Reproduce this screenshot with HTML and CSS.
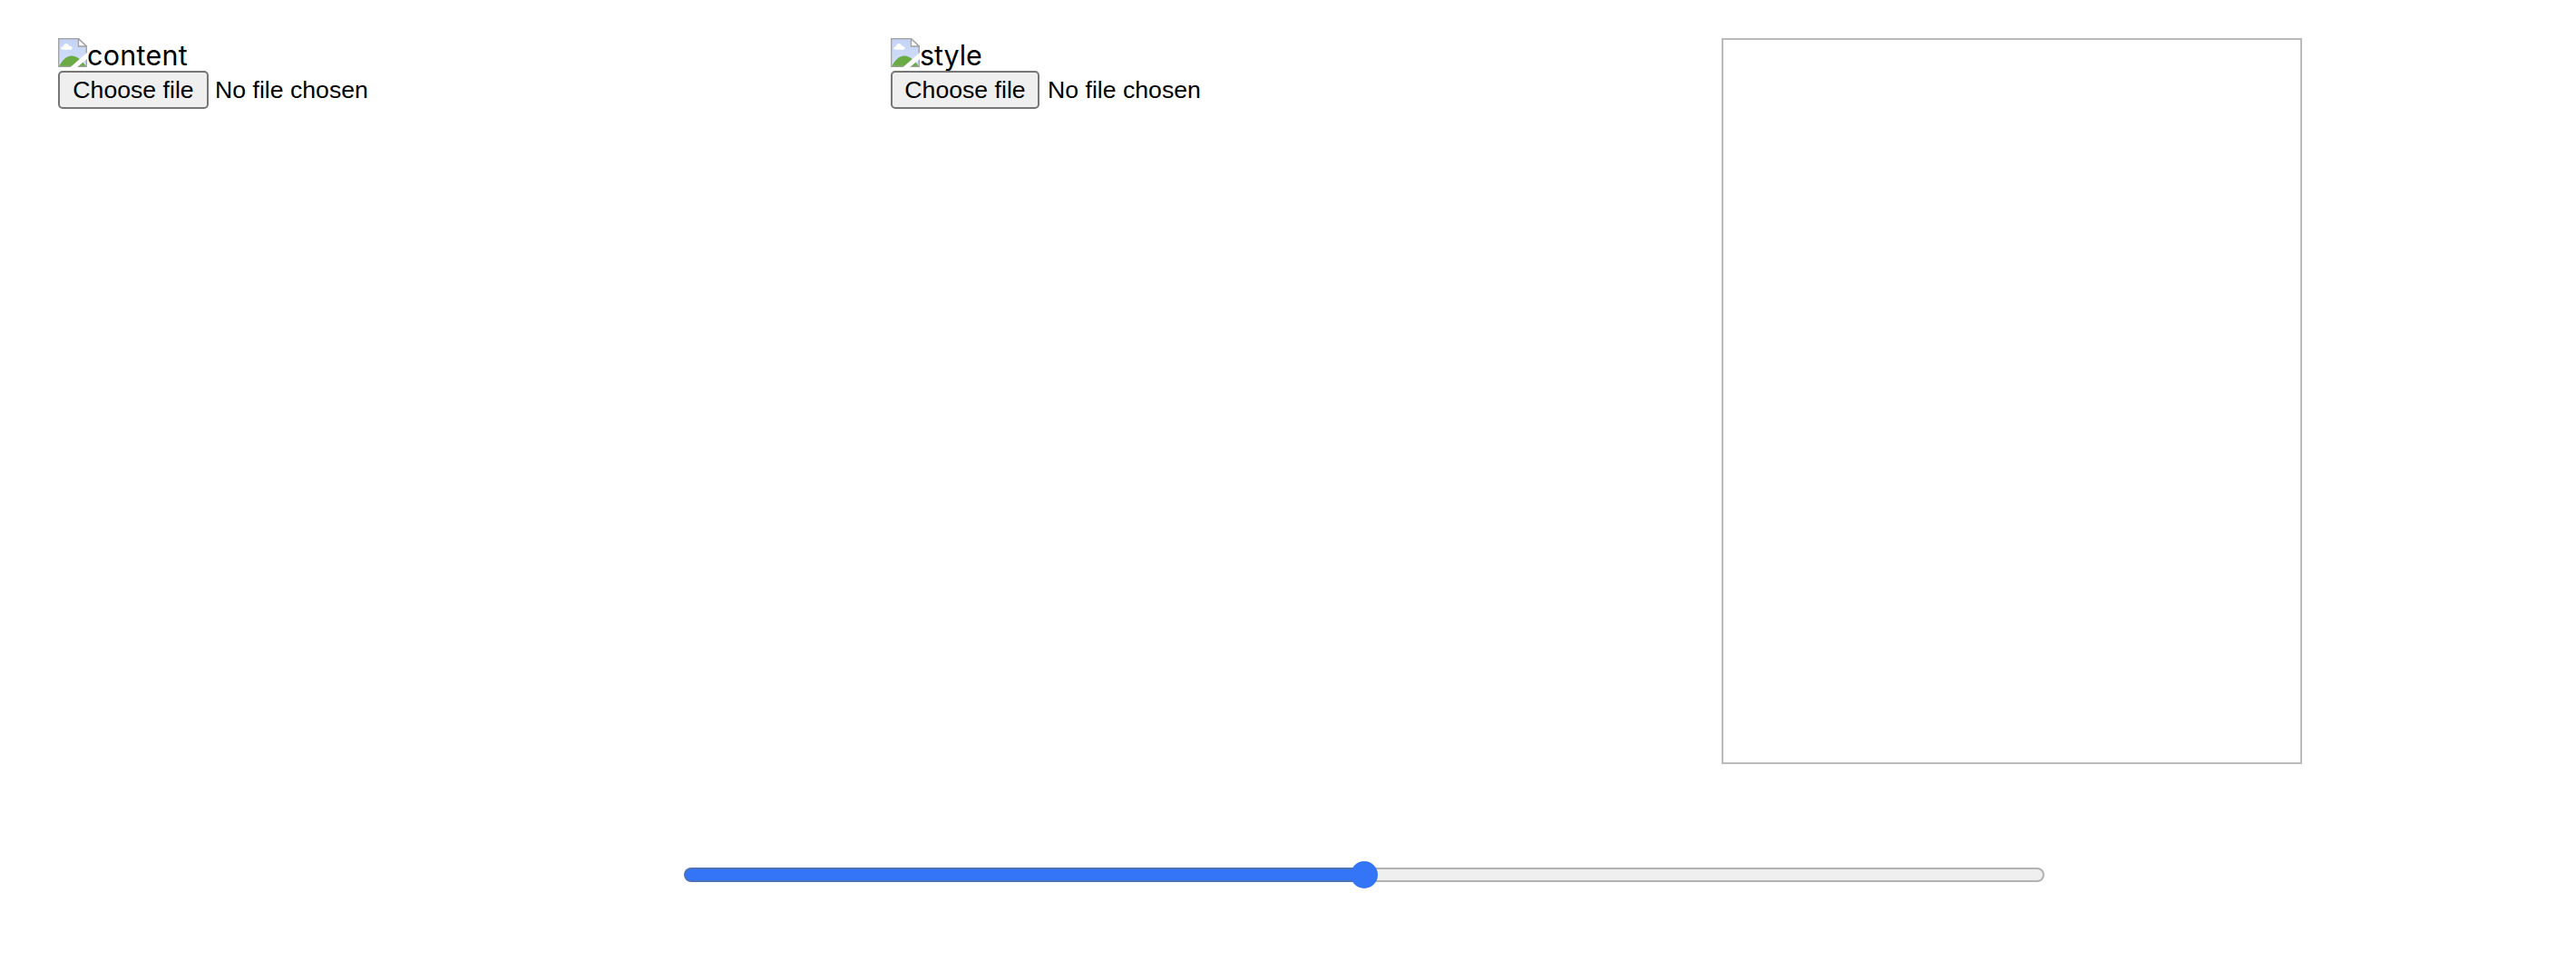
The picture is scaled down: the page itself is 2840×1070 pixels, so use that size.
FILE: index.html
```html
<!DOCTYPE html>
<html lang="en">
<head>
<meta charset="utf-8">
<title>Style transfer</title>
<link rel="stylesheet" href="styles.css">
</head>
<body>
<svg class="defs" aria-hidden="true">
  <defs>
    <linearGradient id="sky" x1="0" y1="0" x2="0" y2="1">
      <stop offset="0" stop-color="#c3d3f5"/>
      <stop offset="1" stop-color="#d3e0fa"/>
    </linearGradient>
    <symbol id="broken" viewBox="0 0 32 32">
      <path d="M.7 .7H22.500L31.300 9V31.300H.7Z" fill="url(#sky)"/>
      <path d="M1.300 31C4 25 9 19.500 15 19.500C21 19.500 27 25 30.700 31Z" fill="#6aab46"/>
      <path d="M5.500 12.700C2.500 12.700 2.500 9 5.800 9.200C6.500 5 11.500 5 12.500 8.800C16.300 8.500 16.500 12.700 14 12.700Z" fill="#fff"/>
      <path d="M.7 31.300V.7H22.500L31.300 9V31.300Z" fill="none" stroke="#a0a0a0" stroke-width="1.300"/>
      <path d="M22.500 .7V9H31.300Z" fill="#fff" stroke="#a0a0a0" stroke-width="1.300"/>
      <path d="M13 32.500L32.500 15.500V22.500L20.500 32.500Z" fill="#fff"/>
    </symbol>
  </defs>
</svg>
<main class="panels">
  <section class="panel">
    <div class="picture"><svg class="broken"><use href="#broken"/></svg><span class="alt alt-content">content</span></div>
    <div class="picker"><button class="choose choose-content" type="button">Choose file</button><span>No file chosen</span></div>
  </section>
  <section class="panel">
    <div class="picture"><svg class="broken"><use href="#broken"/></svg><span class="alt">style</span></div>
    <div class="picker picker-style"><button class="choose choose-style" type="button">Choose file</button><span>No file chosen</span></div>
  </section>
  <section class="panel">
    <div class="result"></div>
  </section>
</main>
<div class="control">
  <input class="ratio" type="range" min="0" max="100" value="50" aria-label="Stylization strength">
</div>
</body>
</html>
```
FILE: styles.css
```css
* { box-sizing: border-box; }
body {
  margin: 0;
  background: #fff;
  color: #000;
  font-family: Inter, sans-serif;
}
.defs { position: absolute; width: 0; height: 0; }
.panels {
  display: grid;
  grid-template-columns: 918px 916px 1fr;
  padding: 42px 0 0 64px;
}
.picture {
  display: flex;
  height: 36px;
}
.broken { width: 32px; height: 32px; flex: none; }
.alt {
  font-size: 30.5px;
  line-height: 37px;
  letter-spacing: -0.1px;
}
.alt-content { letter-spacing: 0.25px; }
.picker {
  display: flex;
  align-items: center;
  gap: 7px;
  font: 26.667px/30px "Liberation Sans", Arial, sans-serif;
}
.picker-style { gap: 9px; }
.choose {
  height: 42px;
  padding: 0;
  border: 2px solid #767676;
  border-radius: 5px;
  background: #efefef;
  color: #000;
  font: inherit;
}
.choose-content { width: 166px; }
.choose-style { width: 164px; }
.result {
  width: 640px;
  height: 800px;
  border: 2px solid #bbb;
}
.control {
  display: flex;
  padding: 107px 0 0 754px;
}
.ratio {
  appearance: none;
  width: 1500px;
  height: 30px;
  margin: 0;
  background: transparent;
}
.ratio::-webkit-slider-runnable-track {
  height: 16px;
  border: 2px solid transparent;
  border-radius: 8px;
  background:
    linear-gradient(to right, #3375f6 50%, #efefef 50%) padding-box,
    linear-gradient(to right, #4a72ba 50%, #b2b2b2 50%) border-box;
}
.ratio::-webkit-slider-thumb {
  appearance: none;
  width: 30px;
  height: 30px;
  margin-top: -9px;
  border-radius: 50%;
  background: #3375f6;
}
```
